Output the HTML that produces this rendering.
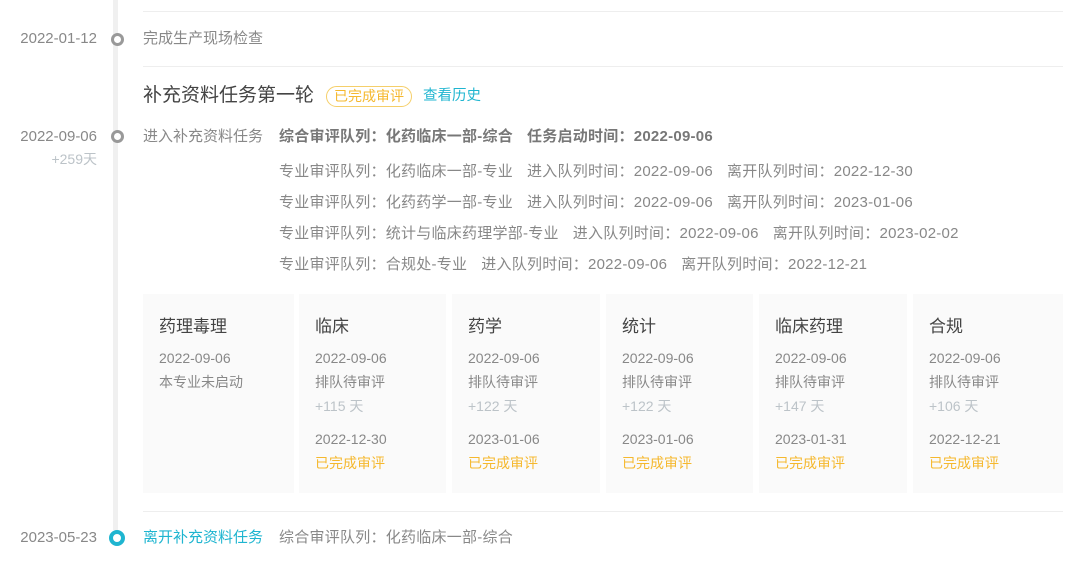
<!DOCTYPE html>
<html><head><meta charset="utf-8"><style>
*{margin:0;padding:0;box-sizing:border-box}
body{width:1080px;height:572px;background:#fff;position:relative;overflow:hidden;font-family:"Liberation Sans","Noto Sans CJK SC",sans-serif;font-size:15px;color:#888}
.a{position:absolute;white-space:nowrap;line-height:20px}
.line{position:absolute;left:113px;top:0;width:5px;height:530px;background:#f0f0f0}
.hr{position:absolute;left:143px;width:920px;height:1px;background:#eee}
.dot{position:absolute;width:13px;height:13px;border-radius:50%;border:3.5px solid #999;background:#fff;left:110.5px}
.date{right:983px;color:#888}
.det{letter-spacing:0.25px}
.sp{display:inline-block;width:14px}
.card{position:absolute;top:294px;height:199px;background:#fafafa}
.card .t{position:absolute;left:16px;top:23px;font-size:17px;color:#444;line-height:20px}
.card .l{position:absolute;left:16px;font-size:14px;color:#888;line-height:20px;white-space:nowrap}
.g{color:#bcc3c8!important}.y{color:#f5b82e!important}
</style></head><body>
<div class="line"></div>
<div class="hr" style="top:11px"></div>
<div class="hr" style="top:66px"></div>
<div class="hr" style="top:511px"></div>

<div class="a date" style="top:29px">2022-01-12</div>
<div class="dot" style="top:33px"></div>
<div class="a" style="left:143px;top:29px">完成生产现场检查</div>

<div class="a" style="left:143px;top:85px;font-size:19px;color:#444;line-height:22px">补充资料任务第一轮</div>
<div class="a" style="left:326px;top:86px;height:21px;width:86px;border:1px solid #f5cf6a;border-radius:11px;color:#f5b82e;font-size:14px;line-height:19px;text-align:center">已完成审评</div>
<div class="a" style="left:423px;top:86px;color:#1fb5d0;font-size:14.5px">查看历史</div>

<div class="a date" style="top:127px">2022-09-06</div>
<div class="a date" style="top:149px;font-size:14px;color:#bcc3c8">+259天</div>
<div class="dot" style="top:130px"></div>
<div class="a" style="left:143px;top:127px">进入补充资料任务</div>
<div class="a det" style="left:279px;top:127px;font-weight:bold;color:#777">综合审评队列：化药临床一部-综合<span class="sp"></span>任务启动时间：2022-09-06</div>
<div class="a det" style="left:279px;top:162px">专业审评队列：化药临床一部-专业<span class="sp"></span>进入队列时间：2022-09-06<span class="sp"></span>离开队列时间：2022-12-30</div>
<div class="a det" style="left:279px;top:193px">专业审评队列：化药药学一部-专业<span class="sp"></span>进入队列时间：2022-09-06<span class="sp"></span>离开队列时间：2023-01-06</div>
<div class="a det" style="left:279px;top:224px">专业审评队列：统计与临床药理学部-专业<span class="sp"></span>进入队列时间：2022-09-06<span class="sp"></span>离开队列时间：2023-02-02</div>
<div class="a det" style="left:279px;top:255px">专业审评队列：合规处-专业<span class="sp"></span>进入队列时间：2022-09-06<span class="sp"></span>离开队列时间：2022-12-21</div>

<div class="card" style="left:143px;width:151px"><div class="t">药理毒理</div><div class="l" style="top:54px">2022-09-06</div><div class="l" style="top:78px">本专业未启动</div></div>
<div class="card" style="left:299px;width:147px"><div class="t">临床</div><div class="l" style="top:54px">2022-09-06</div><div class="l" style="top:78px">排队待审评</div><div class="l g" style="top:102px">+115 天</div><div class="l" style="top:135px">2022-12-30</div><div class="l y" style="top:159px">已完成审评</div></div>
<div class="card" style="left:452px;width:148px"><div class="t">药学</div><div class="l" style="top:54px">2022-09-06</div><div class="l" style="top:78px">排队待审评</div><div class="l g" style="top:102px">+122 天</div><div class="l" style="top:135px">2023-01-06</div><div class="l y" style="top:159px">已完成审评</div></div>
<div class="card" style="left:606px;width:147px"><div class="t">统计</div><div class="l" style="top:54px">2022-09-06</div><div class="l" style="top:78px">排队待审评</div><div class="l g" style="top:102px">+122 天</div><div class="l" style="top:135px">2023-01-06</div><div class="l y" style="top:159px">已完成审评</div></div>
<div class="card" style="left:759px;width:148px"><div class="t">临床药理</div><div class="l" style="top:54px">2022-09-06</div><div class="l" style="top:78px">排队待审评</div><div class="l g" style="top:102px">+147 天</div><div class="l" style="top:135px">2023-01-31</div><div class="l y" style="top:159px">已完成审评</div></div>
<div class="card" style="left:913px;width:150px"><div class="t">合规</div><div class="l" style="top:54px">2022-09-06</div><div class="l" style="top:78px">排队待审评</div><div class="l g" style="top:102px">+106 天</div><div class="l" style="top:135px">2022-12-21</div><div class="l y" style="top:159px">已完成审评</div></div>

<div class="a date" style="top:528px">2023-05-23</div>
<div class="dot" style="top:530px;width:16px;height:16px;left:109px;border:4.5px solid #1fb5d0"></div>
<div class="a" style="left:143px;top:528px;color:#1fb5d0">离开补充资料任务</div>
<div class="a det" style="left:279px;top:528px">综合审评队列：化药临床一部-综合</div>
</body></html>
